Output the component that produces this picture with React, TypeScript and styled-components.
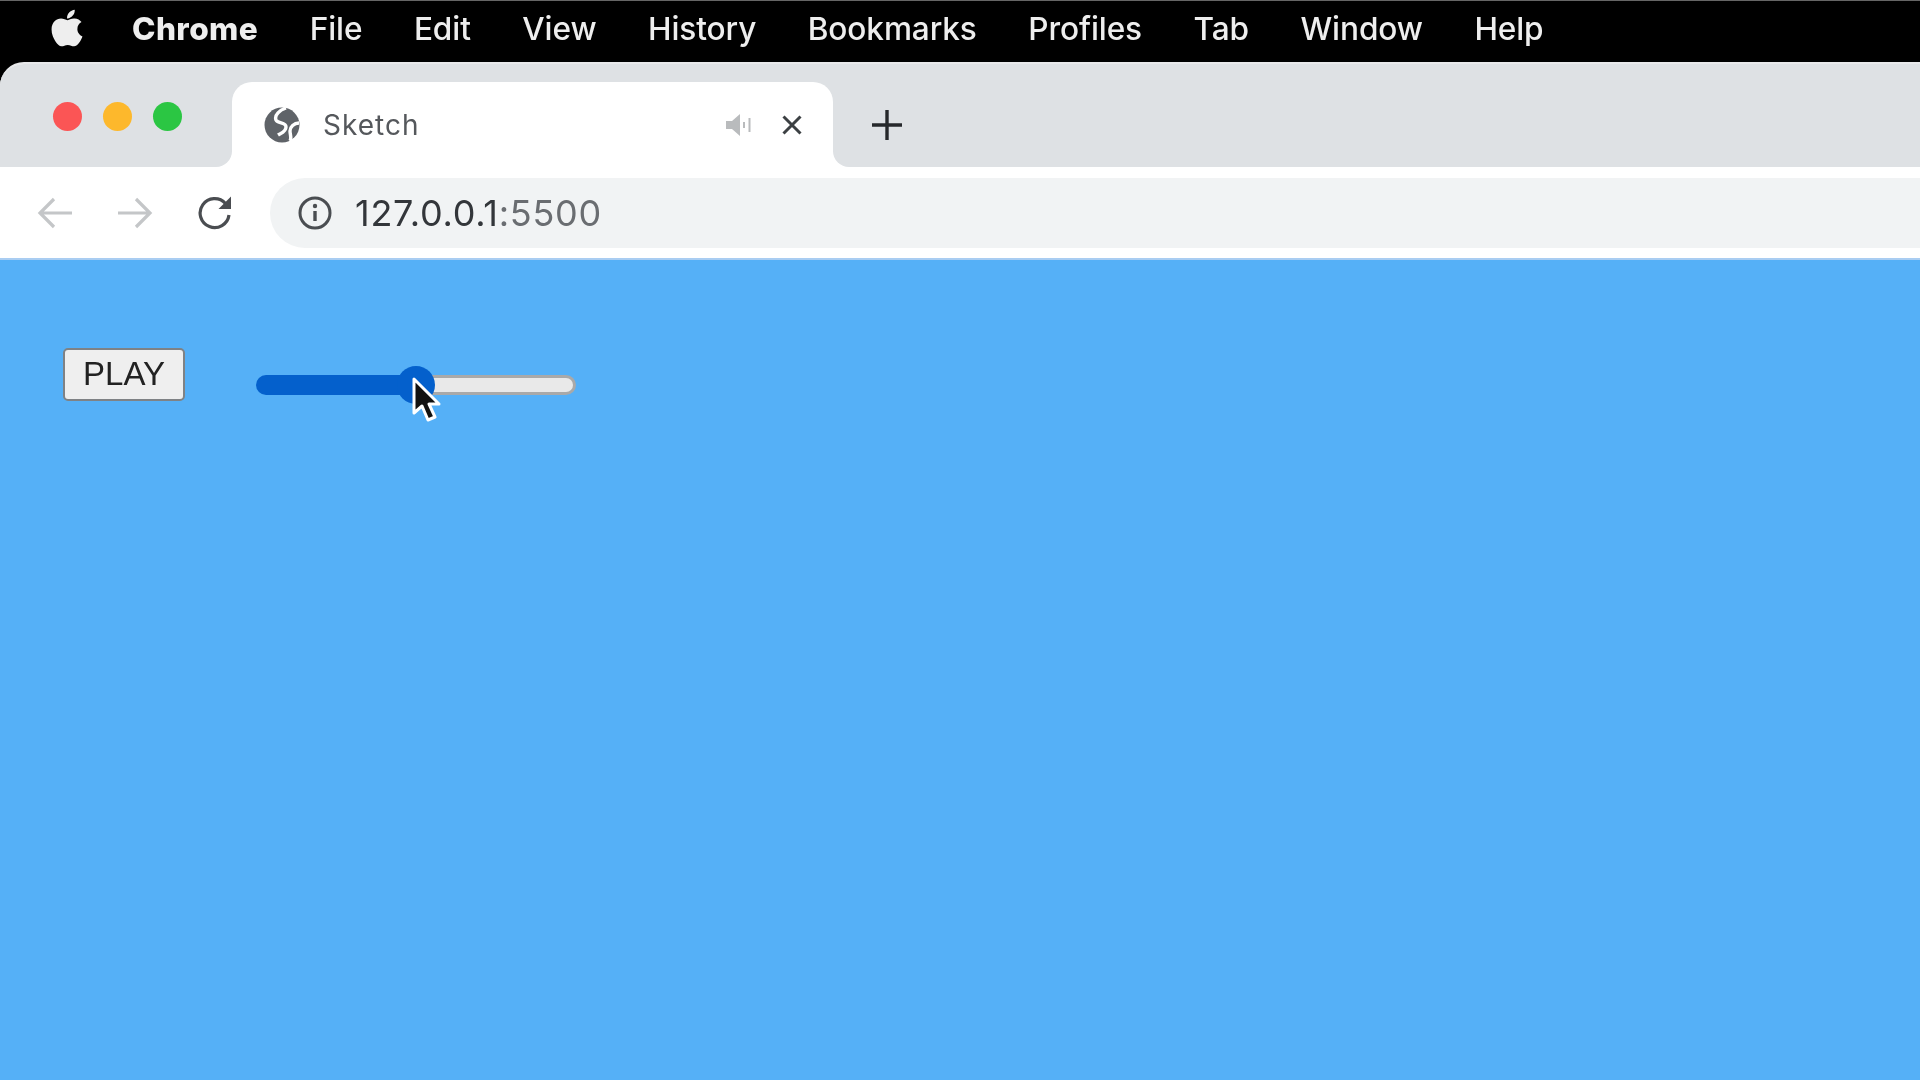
import React from "react";
import styled, { createGlobalStyle } from "styled-components";
import { FaApple } from "react-icons/fa";

const Global = createGlobalStyle`
  html, body { margin: 0; padding: 0; height: 100%; overflow: hidden; background: #000; }
  #root { height: 100%; }
`;

const Screen = styled.div`
  display: flex;
  flex-direction: column;
  width: 1920px;
  height: 1080px;
  background: #000;
  font-family: Inter, "Liberation Sans", sans-serif;
  filter: blur(0.7px);
`;

const MenuBar = styled.div`
  display: flex;
  align-items: center;
  flex: 0 0 62px;
  box-sizing: border-box;
  height: 62px;
  padding: 0 0 6px 49px;
  border-top: 1px solid #666;
  background: #000;
  color: #eee;
`;

const AppleMark = styled(FaApple)`
  width: 36px;
  height: 42px;
  margin-right: 47px;
  margin-top: -1px;
  color: #eee;
`;

const MenuItems = styled.div`
  display: flex;
  align-items: center;
  gap: 51.5px;
`;

const MenuItem = styled.span<{ $strong?: boolean }>`
  font-size: 31.6px;
  font-weight: ${(p) => (p.$strong ? 800 : 500)};
  letter-spacing: ${(p) => (p.$strong ? "0.4px" : "-0.1px")};
  line-height: 36px;
`;

const TabStrip = styled.div`
  display: flex;
  flex: 0 0 105px;
  overflow: hidden;
  border-top: 2px solid #e8e9eb;
  box-sizing: border-box;
  background: #fff;
  border-top-left-radius: 24px;
`;

const LeftCap = styled.div`
  display: flex;
  flex: 0 0 232px;
  align-items: flex-start;
  gap: 21px;
  box-sizing: border-box;
  padding: 38px 0 0 53px;
  background: #dee1e4;
  border-bottom-right-radius: 16px;
`;

const Light = styled.span<{ $color: string }>`
  width: 29px;
  height: 29px;
  border-radius: 50%;
  background: ${(p) => p.$color};
`;

const TabSlot = styled.div`
  display: flex;
  flex: 0 0 601px;
  box-sizing: border-box;
  padding-top: 18px;
  background: #dee1e4;
`;

const Tab = styled.div`
  display: flex;
  flex: 1;
  align-items: center;
  box-sizing: border-box;
  padding: 0 31px 0 32px;
  background: #fff;
  border-radius: 20px 20px 0 0;
`;

const TabTitle = styled.span`
  flex: 1;
  margin-left: 23px;
  font-size: 28px;
  letter-spacing: 1px;
  color: #55585c;
`;

const TabIcon = styled.svg`
  display: block;
  flex: none;
`;

const MuteIcon = styled(TabIcon)`
  margin-right: 31px;
`;

const RightFill = styled.div`
  display: flex;
  flex: 1;
  align-items: center;
  box-sizing: border-box;
  padding: 18px 0 0 39px;
  background: #dee1e4;
  border-bottom-left-radius: 16px;
`;

const Toolbar = styled.div`
  display: flex;
  align-items: center;
  flex: 0 0 93px;
  box-sizing: border-box;
  padding: 1px 0 0 37px;
  background: #fff;
  border-bottom: 2px solid #a9cdf2;
`;

const NavIcons = styled.div`
  display: flex;
  align-items: center;
  gap: 44px;
  margin-right: 37px;
`;

const Omnibox = styled.div`
  display: flex;
  flex: 1;
  align-items: center;
  height: 70px;
  padding-left: 28px;
  background: #f1f3f4;
  border-radius: 35px 0 0 35px;
`;

const Address = styled.span`
  margin-left: 23px;
  font-size: 36px;
  letter-spacing: 0.75px;
  color: #33363a;
`;

const Port = styled.span`
  color: #6a6d71;
`;

const Page = styled.main`
  display: flex;
  flex: 1;
  align-items: flex-start;
  gap: 71px;
  padding: 88px 0 0 63px;
  background: #55b0f7;
`;

const PlayButton = styled.button`
  box-sizing: border-box;
  width: 122px;
  height: 53px;
  padding: 0 0 2px;
  background: #efefef;
  border: 2px solid #7f8285;
  border-radius: 5px;
  font-family: "Liberation Sans", Arial, sans-serif;
  font-size: 33px;
  color: #222;
`;

const Slider = styled.div`
  position: relative;
  display: flex;
  width: 320px;
  height: 20px;
  margin-top: 27px;
`;

const SliderFill = styled.div`
  background: #0460cc;
  border-radius: 10px 0 0 10px;
`;

const SliderRest = styled.div`
  flex: 1;
  box-sizing: border-box;
  background: #e9e9e9;
  border: 3px solid #a9a9a9;
  border-left: 0;
  border-radius: 0 10px 10px 0;
`;

const Thumb = styled.div`
  position: absolute;
  top: -9px;
  width: 38px;
  height: 38px;
  margin-left: -19px;
  border-radius: 50%;
  background: #0460cc;
`;

const Cursor = styled.svg`
  position: absolute;
  top: 2px;
  left: 155px;
`;

const MENU = ["File", "Edit", "View", "History", "Bookmarks", "Profiles", "Tab", "Window", "Help"];

export default function App() {
  const value = 50;
  return (
    <Screen>
      <Global />
      <MenuBar>
        <AppleMark />
        <MenuItems>
          <MenuItem $strong>Chrome</MenuItem>
          {MENU.map((m) => (
            <MenuItem key={m}>{m}</MenuItem>
          ))}
        </MenuItems>
      </MenuBar>

      <TabStrip>
        <LeftCap>
          <Light $color="#fb5555" />
          <Light $color="#fdb82c" />
          <Light $color="#2bc643" />
        </LeftCap>
        <TabSlot>
          <Tab>
            <TabIcon width="36" height="36" viewBox="0 0 36 36">
              <circle cx="18" cy="18" r="17.5" fill="#5f6368" />
              <path d="M22 1C16 3 10 8 12 13C14 17 22 15 22 20C22 25 17 26 14 28" stroke="#fff" strokeWidth="3.4" fill="none" />
              <path d="M35 16C30 16 26 20 26 24C26 28 28 31 26 34" stroke="#fff" strokeWidth="3.4" fill="none" />
            </TabIcon>
            <TabTitle>Sketch</TabTitle>
            <MuteIcon width="26" height="24" viewBox="0 0 26 24">
              <path d="M1 8h6l8-7v22l-8-7H1z" fill="#b9bbbd" />
              <path d="M19 9v6M24.5 5v14" stroke="#b9bbbd" strokeWidth="2" fill="none" />
            </MuteIcon>
            <TabIcon width="20" height="20" viewBox="0 0 20 20">
              <path d="M1.5 1.5l17 17M18.5 1.5l-17 17" stroke="#3c4043" strokeWidth="3" fill="none" />
            </TabIcon>
          </Tab>
        </TabSlot>
        <RightFill>
          <TabIcon width="30" height="30" viewBox="0 0 30 30">
            <path d="M15 0v30M0 15h30" stroke="#26282b" strokeWidth="3.4" fill="none" />
          </TabIcon>
        </RightFill>
      </TabStrip>

      <Toolbar>
        <NavIcons>
          <TabIcon width="36" height="32" viewBox="0 0 36 32">
            <path d="M35 16H3M17 2L3 16l14 14" stroke="#c4c6c8" strokeWidth="3.2" fill="none" />
          </TabIcon>
          <TabIcon width="36" height="32" viewBox="0 0 36 32">
            <path d="M1 16h32M19 2l14 14-14 14" stroke="#c4c6c8" strokeWidth="3.2" fill="none" />
          </TabIcon>
          <TabIcon width="36" height="36" viewBox="0 0 36 36">
            <path d="M28.5 8.5A14.5 14.5 0 1 0 32 20" stroke="#4a4d51" strokeWidth="3.2" fill="none" />
            <path d="M34 1.5V14H21.5z" fill="#4a4d51" />
          </TabIcon>
        </NavIcons>
        <Omnibox>
          <TabIcon width="34" height="34" viewBox="0 0 34 34">
            <circle cx="17" cy="17" r="15" stroke="#4a4d51" strokeWidth="3" fill="none" />
            <path d="M17 15v10" stroke="#4a4d51" strokeWidth="3.4" fill="none" />
            <circle cx="17" cy="10" r="2.2" fill="#4a4d51" />
          </TabIcon>
          <Address>
            127.0.0.1<Port>:5500</Port>
          </Address>
        </Omnibox>
      </Toolbar>

      <Page>
        <PlayButton>PLAY</PlayButton>
        <Slider>
          <SliderFill style={{ width: `${value}%` }} />
          <SliderRest />
          <Thumb style={{ left: `${value}%` }} />
          <Cursor width="30" height="46" viewBox="0 0 30 46">
            <path d="M3 2v34l8-7 6 14 7-3-6-13h10z" fill="#111" stroke="#fff" strokeWidth="3" strokeLinejoin="round" />
          </Cursor>
        </Slider>
      </Page>
    </Screen>
  );
}
